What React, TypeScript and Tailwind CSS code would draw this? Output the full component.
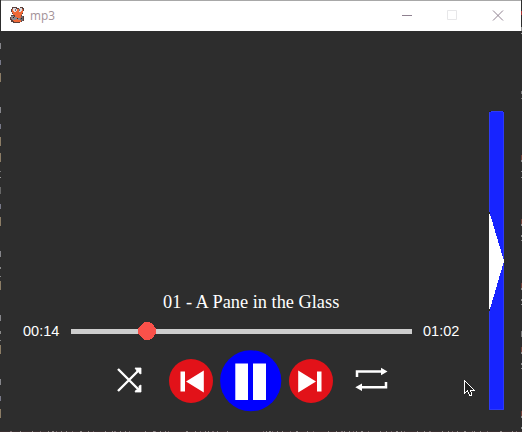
const leftMarks = [[43, 6, '#85858a'], [60, 5, '#777888'], [73, 9, '#8b7c65'], [107, 6, '#85858a'], [124, 5, '#777888'], [137, 9, '#8b7c65'], [153, 9, '#8b7c65'], [171, 1, '#777'], [177, 1, '#999'], [187, 7, '#666'], [204, 5, '#777888'], [217, 9, '#8b7c65'], [251, 6, '#85858a'], [267, 2, '#888'], [276, 1, '#888'], [281, 9, '#8b7c65'], [315, 6, '#85858a'], [331, 3, '#888'], [340, 1, '#888'], [345, 9, '#8b7c65'], [379, 6, '#85858a'], [396, 5, '#777888'], [409, 9, '#8b7c65']] as const;
const rightMarks = [[11, 4, '#a33'], [27, 4, '#999'], [33, 1, '#999'], [91, 3, '#777'], [98, 1, '#777'], [155, 5, '#704038'], [160, 2, '#888'], [171, 1, '#888'], [177, 1, '#888'], [219, 5, '#704038'], [224, 2, '#888'], [235, 2, '#888'], [240, 1, '#888'], [283, 5, '#704038'], [288, 2, '#888'], [299, 2, '#888'], [304, 1, '#888'], [331, 6, '#777'], [347, 5, '#704038'], [352, 2, '#888'], [363, 2, '#888'], [368, 1, '#888'], [411, 5, '#704038'], [416, 2, '#888'], [427, 2, '#888']] as const;
const bottomMarks = [10, 20, 32, 40, 48, 52, 56, 61, 66, 72, 80, 88, 93, 105, 112, 114, 120, 125, 129, 145, 153, 155, 160, 165, 168, 186, 195, 200, 205, 208, 212, 217, 227, 263, 266, 269, 272, 277, 282, 290, 296, 307, 313, 328, 336, 341, 344, 349, 353, 356, 361, 368, 380, 386, 391, 396, 401, 404, 417, 424, 429, 442, 448, 452, 457, 464, 472, 474, 480, 487, 500, 512, 516];

function Mascot() {
  return (
    <svg className="h-[18px] w-[16px]" viewBox="0 0 16 18" shapeRendering="crispEdges">
      <path d="M3 1h5v1h3V1h3v1h1v3h-1v3h-1v2h2v5h-2v1h-2v1H4v-1H2v-2H1v-3h1V9h2V8H3V6H2V3h1z" fill="#5b403b" />
      <path d="M3 3h11v4h-1v2h-1v2h1v3h-1v2H5v-1H4v-4h2V9H4V7H3z" fill="#ef6836" />
      <path d="M4 2h3v1h1v2H7v1H5V5H4zM10 2h3v3h-1v1h-2z" fill="#dfdbe0" />
      <path d="M6 3h1v2H6zM10 3h1v2h-1z" fill="#77747c" />
      <path d="M2 10h3v1h3v1h3v2H9v-1H7v1H3v-1H2z" fill="#8b858a" />
      <path d="M12 10h2v5h-2v-1h-1v-2h1z" fill="#6e676b" />
      <path d="M4 11h1v1H4zM8 12h1v1H8zM12 12h1v1h-1z" fill="#29272a" />
    </svg>
  );
}

function Track({ next = false }: { next?: boolean }) {
  return (
    <button className="size-[44px] shrink-0" aria-label={next ? 'Next' : 'Previous'}>
      <svg viewBox="0 0 44 44" className={next ? 'size-full -scale-x-100' : 'size-full'}>
        <circle cx="22" cy="22" r="22" fill="#e21219" />
        <path d="M11.5 12.5h4.5v20h-4.5zM17 22.5 34.8 11.5v22z" fill="white" />
      </svg>
    </button>
  );
}

export default function App() {
  return (
    <div className="relative flex h-[432px] w-[522px] flex-col overflow-hidden bg-[#2d2d2d] font-['Liberation_Sans',sans-serif] text-white">
      <header className="ml-px mr-px flex h-[31px] shrink-0 items-center border-t border-[#a8a8a8] bg-white text-[#a39297]">
        <div className="ml-2 mb-0.5"><Mascot /></div>
        <span className="ml-[5px] font-['Open_Sans',sans-serif] text-[11.8px] leading-none">mp3</span>
        <svg className="ml-auto mr-4 mb-0.5 h-[12px] w-[104px]" viewBox="0 0 104 12" fill="none">
          <path d="M1 6.5h10" stroke="#8f8190" />
          <path d="M46.5 1.5h9v9h-9z" stroke="#e7e7e9" />
          <path d="m92 1.5 10 10m0-10-10 10" stroke="#8f8190" />
        </svg>
      </header>
      <main className="flex min-h-0 flex-1">
        <section className="flex w-[482px] flex-col">
          <h1 className="mt-[260px] ml-[163px] h-[23px] whitespace-nowrap font-['Liberation_Serif',serif] text-[18.35px] leading-[23px]">01 - A Pane in the Glass</h1>
          <div className="mt-[7px] flex h-5 items-center text-[14.5px] leading-5">
            <span className="ml-[23px] w-[48px]">00:14</span>
            <div className="flex h-[5px] w-[341px] items-center bg-[#cdcdcd]">
              <svg className="ml-[67px] size-[18px] shrink-0" viewBox="0 0 18 18" shapeRendering="crispEdges">
                <path d="M7 0h4l2 1 3 3 2 3v4l-2 3-3 3-2 1H7l-2-1-3-3-2-3V7l2-3 3-3z" fill="#f9514a" />
              </svg>
            </div>
            <span className="ml-[11px]">01:02</span>
          </div>
          <div className="mt-[9px] flex h-[62px] items-center">
            <svg className="ml-[116px] mb-[2px] h-[28px] w-[27px]" viewBox="0 0 27 28" fill="none">
              <path d="m2 3 21 21M2 25 23 4" stroke="white" strokeWidth="2.4" />
              <path d="M19 2h6v6l-2-1v-2h-2zM23 20l2-1v7h-6l1-2h3z" fill="white" stroke="white" strokeWidth=".8" />
            </svg>
            <div className="ml-[26px] flex"><Track /></div>
            <button className="ml-[7px] h-[62px] w-[62px] shrink-0" aria-label="Pause">
              <svg viewBox="0 0 62 62" className="size-full">
                <ellipse cx="30.7" cy="30.7" rx="30.6" ry="30.5" fill="#0000ff" />
                <path d="M15.3 13.5H28V50H15.3zM33 13.5h13V50H33z" fill="white" />
              </svg>
            </button>
            <div className="ml-[7px] flex"><Track next /></div>
            <svg className="ml-[22px] mb-1 h-[26px] w-[33px]" viewBox="0 0 33 26" fill="none">
              <path d="M2 11V5.5h24M31 16v5.2H7" stroke="white" strokeWidth="2.5" />
              <path d="m26 1.7 6.5 3.8-6.5 3.8zM7 17.4.3 21.2 7 25z" fill="white" />
            </svg>
          </div>
        </section>
        <svg className="mt-20 ml-[7px] h-[299px] w-[15px]" viewBox="0 0 15 299">
          <path d="M0 0h15v299H0z" fill="#1724ff" />
          <path d="M.5 .5h14v298H.5z" fill="none" stroke="#2f3af6" />
          <path d="M0 0h2v1H0zM14 0h1v1h-1zM0 101h1v2H0zM0 198h1v2H0z" fill="#222" />
          <path d="M0 103h1l14 47L1 198H0z" fill="white" shapeRendering="crispEdges" />
        </svg>
      </main>
      <svg className="pointer-events-none absolute left-[464px] top-[380px] h-[18px] w-[12px]" viewBox="0 0 12 18" shapeRendering="crispEdges">
        <path d="M.5 .5v13l3-3 2 4.8h2v-2l-1.5-3h4.5z" fill="#202020" stroke="white" />
      </svg>
      <svg className="pointer-events-none absolute inset-0 h-[432px] w-[522px]" viewBox="0 0 522 432" shapeRendering="crispEdges">
        {leftMarks.map(([y, h, color]) => <rect key={`l${y}`} x="0" y={y} width="1" height={h} fill={color} />)}
        {rightMarks.map(([y, h, color]) => <rect key={`r${y}`} x="521" y={y} width="1" height={h} fill={color} />)}
        <path d="M0 431h522v1H0z" fill="#3a3031" />
        {bottomMarks.map((x, i) => <rect key={x} x={x} y="431" width={i % 5 === 0 ? 2 : 1} height="1" fill={i % 3 ? '#8c8583' : '#756669'} />)}
      </svg>
    </div>
  );
}
